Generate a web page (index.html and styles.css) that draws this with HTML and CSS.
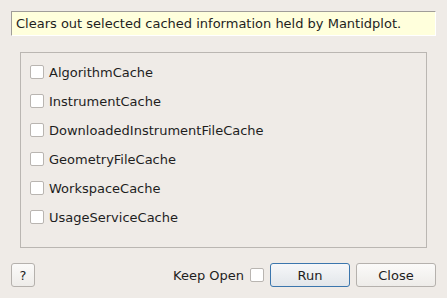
FILE: index.html
```html
<!DOCTYPE html>
<html lang="en">
<head>
  <meta charset="UTF-8" />
  <title>Clear Cache</title>
  <link rel="stylesheet" href="styles.css">
</head>
<body>
  <div class="dialog">
    <div class="info">Clears out selected cached information held by Mantidplot.</div>

    <div class="group">
      <label class="row"><span class="check"></span>AlgorithmCache</label>
      <label class="row"><span class="check"></span>InstrumentCache</label>
      <label class="row"><span class="check"></span>DownloadedInstrumentFileCache</label>
      <label class="row"><span class="check"></span>GeometryFileCache</label>
      <label class="row"><span class="check"></span>WorkspaceCache</label>
      <label class="row"><span class="check"></span>UsageServiceCache</label>
    </div>

    <div class="buttons">
      <button class="btn btn-help">?</button>
      <span class="spacer"></span>
      <span class="keep">Keep Open</span>
      <span class="check keep-check"></span>
      <button class="btn btn-run">Run</button>
      <button class="btn btn-close">Close</button>
    </div>
  </div>
</body>
</html>
```

FILE: styles.css
```css
body {
  margin: 0;
  background: #efebe7;
  font-family: "DejaVu Sans", sans-serif;
  font-size: 13px;
  color: #1e1e1e;
}

.dialog {
  padding: 11px 11px 0 11px;
}

.info {
  height: 23px;
  line-height: 23px;
  padding-left: 4px;
  background: #ffffdc;
  border: 1px solid #fff;
  border-top-color: #a09d99;
  border-left-color: #a09d99;
}

.group {
  margin: 16px 9px 0 9px;
  border: 1px solid #bab6b2;
  padding: 12px 9px 23px 9px;
  display: flex;
  flex-direction: column;
  gap: 15px;
}

.row {
  display: flex;
  align-items: center;
  gap: 5px;
  height: 14px;
}

.check {
  display: inline-block;
  width: 12px;
  height: 12px;
  background: #fff;
  border: 1px solid #b9b5b1;
  border-radius: 2px;
  flex: none;
}

.buttons {
  display: flex;
  align-items: center;
  margin-top: 15px;
  height: 24px;
}

.spacer { flex: 1; }

.keep { margin-right: 6px; }
.keep-check { margin-right: 6px; }

.btn {
  font-family: "DejaVu Sans", sans-serif;
  font-size: 13px;
  color: #1e1e1e;
  height: 24px;
  width: 80px;
  padding: 0;
  border: 1px solid #b5b1ad;
  border-radius: 3px;
  background: linear-gradient(#fbfaf9, #eeece9);
}

.btn-help { width: 24px; }

.btn-run {
  border-color: #3b76ad;
  background: linear-gradient(#f6f7f9, #e2e6ea);
  margin-right: 6px;
}
```
